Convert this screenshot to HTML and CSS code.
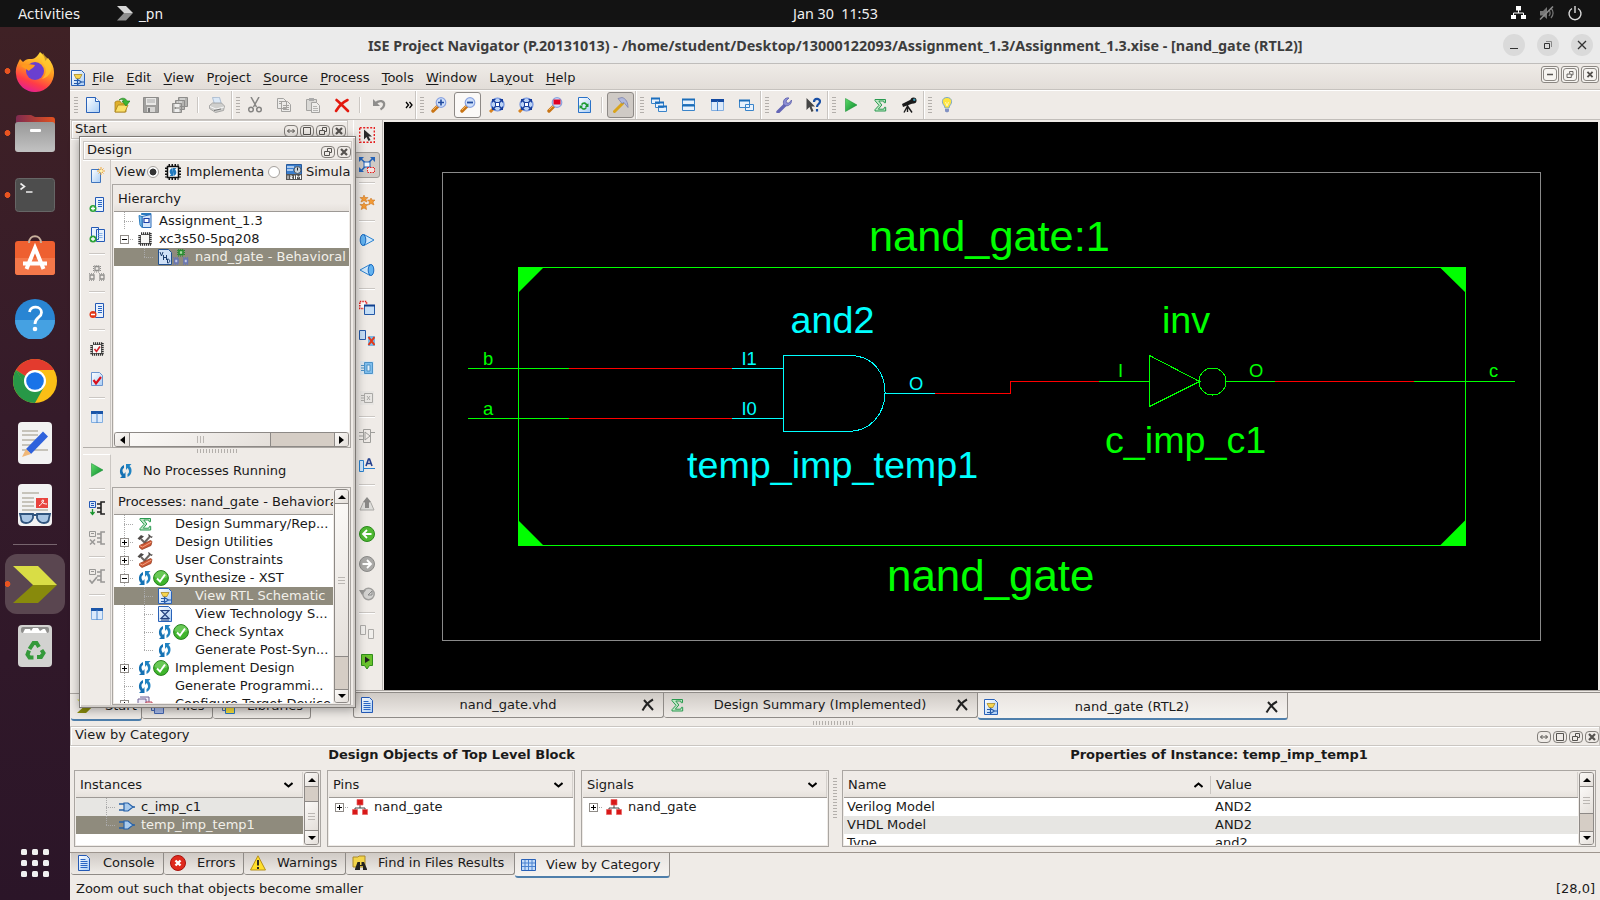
FILE: index.html
```html
<!DOCTYPE html>
<html lang="en">
<head>
<meta charset="utf-8">
<title>ISE Project Navigator</title>
<link rel="stylesheet" href="styles.css">
</head>
<body>
<svg class="defs" width="0" height="0">
<defs>
<linearGradient id="gPage" x1="0" y1="0" x2="1" y2="1"><stop offset="0" stop-color="#fff"/><stop offset="1" stop-color="#a9cdf5"/></linearGradient>
<linearGradient id="gFox" x1="0.7" y1="0" x2="0.3" y2="1"><stop offset="0" stop-color="#ffe23a"/><stop offset="0.45" stop-color="#ff9420"/><stop offset="0.75" stop-color="#ff3c47"/><stop offset="1" stop-color="#e01c9a"/></linearGradient>
<linearGradient id="gFolder" x1="0" y1="0" x2="1" y2="0"><stop offset="0" stop-color="#7e2a50"/><stop offset="1" stop-color="#e2521f"/></linearGradient>
<linearGradient id="gGray" x1="0" y1="0" x2="0" y2="1"><stop offset="0" stop-color="#989898"/><stop offset="1" stop-color="#c2c2c2"/></linearGradient>
<linearGradient id="gPlay" x1="0" y1="0" x2="1" y2="1"><stop offset="0" stop-color="#5fdc6a"/><stop offset="1" stop-color="#08862a"/></linearGradient>
<symbol id="new" viewBox="0 0 16 16"><path d="M1.5.5h9l4 4v11h-13z" fill="url(#gPage)" stroke="#2a62b8"/><path d="M10.5.5v4h4" fill="#fff" stroke="#2a62b8"/></symbol>
<symbol id="open" viewBox="0 0 16 16"><path d="M1 15V5l2-1h3l1 2h5v9z" fill="#e0b02c" stroke="#a8821c" stroke-width=".8"/><path d="M1 15l3-7h10l-3 7z" fill="#fbe069" stroke="#a8821c" stroke-width=".8"/><path d="M5 3c3-3 7-2 8 1h3l-4 5-4-5h2c-1-2-3-2-5-1z" fill="#3db534" stroke="#1d7d1a" stroke-width=".6"/></symbol>
<symbol id="save" viewBox="0 0 16 16"><path d="M.5.5h15v15h-15z" fill="#a09f9d" stroke="#8d8c8a"/><path d="M3 1h10v7H3z" fill="#e9e8e6"/><path d="M4 3h8M4 5h8" stroke="#aaa"/><path d="M4 10h8v5H4z" fill="#d6d5d3"/><path d="M5 11h2v4H5z" fill="#777"/></symbol>
<symbol id="saveall" viewBox="0 0 16 16"><g fill="#b5b4b1" stroke="#8e8d8b"><path d="M6.500.5h9v9h-9zM3.500 3.500h9v9h-9zM.5 6.500h9v9h-9z"/></g><path d="M2.500 7h5v3h-5z" fill="#f0efed"/><path d="M2.500 12h5v3h-5zM8 1.500h5v1H8zM5 4.500h5v1H5z" fill="#eee"/></symbol>
<symbol id="print" viewBox="0 0 16 16"><path d="M3.500.5l7-.2 2 7h-7z" fill="#dbe8f6" stroke="#9fb2ca" stroke-width=".8"/><path d="M.5 8.500l3-2.500h9l3 3-1 4.500-8 2-6-4z" fill="#cfcfcd" stroke="#9b9b99" stroke-width=".8"/><path d="M1 9.500l6 2.500 8-2" stroke="#f5f5f5" fill="none"/><path d="M5 13.500l7-1.500" stroke="#777"/></symbol>
<symbol id="cut" viewBox="0 0 16 16"><g fill="none" stroke="#868583" stroke-width="1.500"><path d="M4 0l5.500 10M12 0L6.500 10"/><circle cx="4" cy="12.500" r="2.300"/><circle cx="12" cy="12.500" r="2.300"/></g></symbol>
<symbol id="copy" viewBox="0 0 16 16"><g fill="#ecebe9" stroke="#a4a3a1"><path d="M1.500 1.500h6l3 3v7h-9zM5.500 4.500h6l3 3v7h-9z"/><path d="M3 4.500h3M3 6.500h2M7 8.500h6M7 10.500h6M7 12.500h6"/></g></symbol>
<symbol id="paste" viewBox="0 0 16 16"><path d="M1.500 2.500h10v11h-10z" fill="#dad9d6" stroke="#a4a3a1"/><path d="M4 1h5v3H4z" fill="#aaa"/><path d="M6.500 5.500h5l3 3v7h-8z" fill="#eeedeb" stroke="#a4a3a1"/><path d="M8 9.500h4M8 11.500h5M8 13.500h5" stroke="#b5b4b2"/></symbol>
<symbol id="del" viewBox="0 0 16 16"><path d="M2.500 3C6 6 10 10 14 14M13.500 3C9 5 5 9 2 14" fill="none" stroke="#e3190e" stroke-width="2.600" stroke-linecap="round"/></symbol>
<symbol id="undo" viewBox="0 0 16 16"><path d="M2 2v7h7z" fill="#8f8e8c"/><path d="M4 7C8 2 14 4 13 8.500c-.4 2-1.500 3-3.500 4" fill="none" stroke="#8f8e8c" stroke-width="2.300"/></symbol>
<symbol id="mag" viewBox="0 0 16 16"><path d="M2 14l5-5" stroke="#c87414" stroke-width="3.400" stroke-linecap="round"/><path d="M2 13l4-4" stroke="#f5b254"/><circle cx="10" cy="5.500" r="4.800" fill="#cfe0fa" stroke="#8aa3e0" stroke-width="1.200"/></symbol>
<symbol id="zin" viewBox="0 0 16 16"><use href="#mag"/><path d="M10 2.500v6M7 5.500h6" stroke="#214ba0" stroke-width="1.600"/></symbol>
<symbol id="zout" viewBox="0 0 16 16"><use href="#mag"/><path d="M7 5.500h6" stroke="#214ba0" stroke-width="1.800"/></symbol>
<symbol id="zfit" viewBox="0 0 16 16"><path d="M1 15l3-3" stroke="#d88320" stroke-width="3"/><circle cx="8.500" cy="7.500" r="6.500" fill="#bcd3f5" stroke="#6f8fdb" stroke-width="1.200"/><path d="M4.500 3.500l8 8M12.500 3.500l-8 8" stroke="#173d9c" stroke-width="1.400"/><path d="M3 2h4L3 6zM14 2h-4l4 4zM3 13V9l4 4zM14 13V9l-4 4z" fill="#173d9c"/><path d="M6.500 5.500h4v4h-4z" fill="#fff" stroke="#173d9c"/></symbol>
<symbol id="zred" viewBox="0 0 16 16"><use href="#mag"/><path d="M6.500 2.500h7v5h-7z" fill="#e00024"/></symbol>
<symbol id="refresh" viewBox="0 0 16 16"><path d="M2.500.5h9l3 3v12h-12z" fill="url(#gPage)" stroke="#2a72c8"/><path d="M5 7.500c1-3 5-3 6-.5l1.500-.5V10H9l1-1.500C9 6.500 7 6.500 6.500 8zM11 10.500c-1 3-5 3-6 .5l-1.500.8V8.500H7L6 10c1 1.500 2.500 1.500 3.500.3z" fill="#1e9b32"/></symbol>
<symbol id="hammer" viewBox="0 0 16 16"><path d="M1.500 14.500l8-8" stroke="#d9a41b" stroke-width="3" stroke-linecap="round"/><path d="M5 1.500l4-1c4 1 6 5 6 10l-4-5-2 1z" fill="#b0b8dc" stroke="#7279a5" stroke-width=".7"/></symbol>
<symbol id="cascade" viewBox="0 0 16 16"><g fill="#e8f2fd" stroke="#3a84c9"><path d="M.5 1.500h8v5h-8zM4.500 5.500h8v5h-8zM7.500 9.500h8v5h-8z"/></g><path d="M0 1.500h9M4 5.500h9M7 9.500h9" stroke="#1c6fbe" stroke-width="2"/></symbol>
<symbol id="tileh" viewBox="0 0 16 16"><path d="M2.500 2.500h12v5h-12zM2.500 8.500h12v5h-12z" fill="#e8f2fd" stroke="#3a84c9"/><path d="M2 2.500h13M2 8.500h13" stroke="#1c6db8" stroke-width="2"/></symbol>
<symbol id="tilev" viewBox="0 0 16 16"><path d="M2.500 2.500h12v11h-12z" fill="#dceafb" stroke="#82aee0"/><path d="M2 3.500h13" stroke="#1349a0" stroke-width="3"/><path d="M8.500 4v10" stroke="#4a86cd"/></symbol>
<symbol id="layers" viewBox="0 0 16 16"><g fill="#e8f2fd" stroke="#3a84c9"><path d="M7.500 7.500h8v6h-8zM1.500 3.500h10v7h-10z"/></g><path d="M1 3.500h11" stroke="#1c6db8" stroke-width="2"/></symbol>
<symbol id="wrench" viewBox="0 0 16 16"><path d="M2 15l7-7" stroke="#6466b6" stroke-width="3.400" stroke-linecap="round"/><path d="M8 8C6 4 9 0 13 1l-3 3 1 2 2 0 2.500-3C16 7 12 10.500 8 8z" fill="#8b8dd4" stroke="#5557a5" stroke-width=".7"/></symbol>
<symbol id="whats" viewBox="0 0 16 16"><path d="M1.500 1v12l3-3 2 5 2-1-2-4.500h3.500z" fill="#454545"/><path d="M9 5c0-4 6-4 6-.5 0 2.500-3 2.500-3 5.500M12 12v2.500" fill="none" stroke="#194fa5" stroke-width="2.200"/></symbol>
<symbol id="play" viewBox="0 0 16 16"><path d="M2.500 1.500v13L14 8z" fill="url(#gPlay)" stroke="#0b8a2b" stroke-width=".5"/></symbol>
<symbol id="sigma" viewBox="0 0 16 16"><path d="M3 2.500h10.500v3.200h-1.300L11.700 4H6.800l3 4-3.500 4.200h5.400l.8-1.900h1.200v3.700H3v-1.300L7 8.300 3 3.700z" fill="#bfe8c6" stroke="#2b9a50" stroke-width="1"/></symbol>
<symbol id="scope" viewBox="0 0 16 16"><path d="M1 7l10-5 2 4-11 4z" fill="#1b1b1b"/><circle cx="12.500" cy="3.500" r="3" fill="#1b1b1b"/><circle cx="13.300" cy="2.800" r="1.200" fill="#3d9bb5"/><path d="M6.500 8v7M6.500 9l-3.500 6.500M6.500 9l4.500 6.500" stroke="#1b1b1b" stroke-width="1.400"/></symbol>
<symbol id="bulb" viewBox="0 0 16 16"><path d="M8 .5C3 .5 2 5.500 5.500 9l.5 2h4l.5-2C14 5.500 13 .5 8 .5z" fill="#ffe53e" stroke="#79a6c9"/><path d="M6 12h4v2.500l-2 1-2-1z" fill="#8292c4"/><path d="M6.500 5L8 9l1.500-4" fill="none" stroke="#fff8b5"/></symbol>
<symbol id="rtl" viewBox="0 0 16 16"><path d="M1.500.5h10l3 3v12h-13z" fill="url(#gPage)" stroke="#2a62b8"/><path d="M4 4.500h8L9.500 9v-.5h-3V9z" fill="#f6d54e" stroke="#a98a2a" stroke-width=".8"/><path d="M4 10.500h4M4 13.500h4M7.500 9.500v5l4-2.500zM11 12h3" fill="none" stroke="#2459a8" stroke-width="1.200"/></symbol>
<symbol id="tech" viewBox="0 0 16 16"><path d="M1.500.5h10l3 3v12h-13z" fill="url(#gPage)" stroke="#2a62b8"/><path d="M4 4.500h8L4 12.500h8zM4 14h8" fill="#b6d0f0" stroke="#23407c" stroke-width="1.100"/></symbol>
<symbol id="doc" viewBox="0 0 16 16"><path d="M2.500.5h8l3 3v12h-11z" fill="url(#gPage)" stroke="#2459b5"/><path d="M4.500 4.500h5M4.500 6.500h7M4.500 8.500h7M4.500 10.500h7M4.500 12.500h7" stroke="#2a66c4"/></symbol>
<symbol id="newsrc" viewBox="0 0 16 16"><path d="M2.500 2.500h9v13h-9z" fill="url(#gPage)" stroke="#3f74bd"/><path d="M12 0v8M8 4h8M9.500 1.500l5 5M14.500 1.500l-5 5" stroke="#f0a93c"/><circle cx="12" cy="4" r="1.500" fill="#fff3b0"/></symbol>
<symbol id="adddoc" viewBox="0 0 16 16"><path d="M6.500.5h8v14h-8z" fill="#e8f1fc" stroke="#2459b5"/><path d="M9 3.500h4M9 5.500h4M9 7.500h4M9 9.500h4" stroke="#2a66c4"/><circle cx="4" cy="11.500" r="3.500" fill="#2ba338"/><path d="M4 9.500v4M2 11.500h4" stroke="#fff" stroke-width="1.300"/></symbol>
<symbol id="addcopy" viewBox="0 0 16 16"><path d="M2.500.5h7v12h-7zM7.500 2.500h8v12h-8z" fill="#e8f1fc" stroke="#2459b5"/><path d="M9.500 6.500h4M9.500 8.500h4M9.500 10.500h4" stroke="#8bb3e8"/><circle cx="4" cy="12" r="3.500" fill="#2ba338"/><path d="M4 10v4M2 12h4" stroke="#fff" stroke-width="1.300"/></symbol>
<symbol id="remdoc" viewBox="0 0 16 16"><path d="M6.500.5h8v14h-8z" fill="#e8f1fc" stroke="#2459b5"/><path d="M9 3.500h4M9 5.500h4M9 7.500h4M9 9.500h4" stroke="#2a66c4"/><circle cx="4" cy="11.500" r="3.500" fill="#e33717"/><path d="M2 11.500h4" stroke="#fff" stroke-width="1.500"/></symbol>
<symbol id="hier" viewBox="0 0 16 16"><path d="M6 1.500h4v4H6zM1 10h4v4H1zM11 10h4v4h-4z" fill="#efebe7" stroke="#8f8e8c" stroke-width="1.300"/><path d="M5 0h6M5 7h6M4.500 1v6M11.500 1v6M0 8.700h6M0 15.300h6M10 8.700h6M10 15.300h6" stroke="#8f8e8c" stroke-dasharray="1 1"/></symbol>
<symbol id="hierc" viewBox="0 0 16 16"><path d="M6 1.500h4v4H6z" fill="#a7dba0" stroke="#238c2c" stroke-width="1.600"/><path d="M1.500 10h3.500v4H1.500zM11 10h3.500v4H11z" fill="#c3c8e4" stroke="#6675b5" stroke-width="1.500"/><path d="M5 .3h6M5 7h6M4.700 1v6M11.500 1v6" stroke="#238c2c" stroke-dasharray="1 1"/><path d="M0 8.500h6M0 15.500h6M10 8.500h6M10 15.500h6" stroke="#6675b5" stroke-dasharray="1 1"/></symbol>
<symbol id="chip" viewBox="0 0 16 16"><path d="M4.500 3.500h8v9h-9v-8z" fill="#f8f8f6" stroke="#666"/><path d="M4 2.500h10M2.500 4v10M3 13.500h11M13.500 2v12" stroke="#333" stroke-width="2.400" stroke-dasharray="1.200 .8"/></symbol>
<symbol id="chipred" viewBox="0 0 16 16"><use href="#chip"/><path d="M5.500 8l2 2.500 3.500-5" fill="none" stroke="#d1202a" stroke-width="1.600"/></symbol>
<symbol id="chipblue" viewBox="0 0 16 16"><path d="M2.500 2.500h11v11h-11z" fill="#fff" stroke="#111" stroke-width="1.500"/><path d="M3.500 1h10M3.500 15h10M1 3.500v10M15 3.500v10" stroke="#111" stroke-width="2" stroke-dasharray="1.500 1.500"/><path d="M7.500 4C4 5 4 9 6 10.500L4.500 12H8V8.500zM8.500 12c3.500-1 3.500-5 1.500-6.500L11.500 4H8v3.500z" fill="#2179bd"/></symbol>
<symbol id="checkdoc" viewBox="0 0 16 16"><path d="M2.500 1.500h8l3 3v10h-11z" fill="url(#gPage)" stroke="#6b95cf"/><path d="M4.500 9l2.500 3.500L12 6" fill="none" stroke="#d8101c" stroke-width="2.200"/></symbol>
<symbol id="sim" viewBox="0 0 16 16"><path d="M.5.5h15v10H.5z" fill="#3b7fce" stroke="#295a9b"/><path d="M1 3h7M1 6h6" stroke="#cfe2fa" stroke-width="1.500"/><circle cx="11.500" cy="6" r="3.500" fill="#ccd5dd" stroke="#4d5a68"/><path d="M11.500 3.500v3" stroke="#222"/><path d="M0 10h16v6H0z" fill="#555"/><path d="M2 11.500v3.500M4 12h2v1.300h-1.500v1.200h2M8.500 11.500v3.500M10.500 15v-3.500l2 1.500 2-1.500V15" fill="none" stroke="#fff"/></symbol>
<symbol id="project" viewBox="0 0 16 16"><path d="M4.500.5h9.500v1H4.500z" fill="#5aa0d8" stroke="#2a7bbf"/><path d="M5 3.500l9-2v13H5.500z" fill="#d5e6fa" stroke="#2a6bb8"/><path d="M2 2.500l3 1v11L3 12z" fill="#7dbcea" stroke="#2a7bbf"/><path d="M7 5.500h5v4H7z" fill="#fff" stroke="#1d3fa5" stroke-width="1.200"/></symbol>
<symbol id="vhd" viewBox="0 0 16 16"><path d="M1.500.5h10l3 3v12h-13z" fill="#cfe0f6" stroke="#20508f"/><path d="M3 3l1.500 4L6 3M6.500 6v5M9.500 6v5M6.500 8.500h3M10.500 10v4c3 0 3-4 0-4z" fill="none" stroke="#1c3c6c"/></symbol>
<symbol id="proc" viewBox="0 0 16 16"><path d="M6 2C1 4 1 11 4 13l-2 2h5.500V9L6 11C4 9 4 6 6 5z" fill="#1571b3"/><path d="M9.500 14c5-2 5-9 2-11l2-2H8v6l1.500-2c2 2 2 5 0 6z" fill="#2083c2"/></symbol>
<symbol id="ok" viewBox="0 0 16 16"><circle cx="8" cy="8" r="7.400" fill="#3fb52c" stroke="#247f1b"/><path d="M1.500 7a6.500 6 0 0 1 13 0c-4 2-8 2-13 0z" fill="#8cd97a" opacity=".55"/><path d="M4 8.500l3 3 5-7" fill="none" stroke="#fff" stroke-width="2"/></symbol>
<symbol id="tools" viewBox="0 0 16 16"><path d="M4 5l7 7M12.500 3L7 9" stroke="#6b6663" stroke-width="2"/><path d="M.5 4.500L4 1l3 1.500L4 5 2.500 6zM11 0l1 3 3 1 .5-2-1.500.5L13 1z" fill="#4e4a48"/><path d="M2.500 11.500L13.500 6.500l1.500 1-1 4-9 4-2.500-2z" fill="#cf5836" stroke="#8b3519" stroke-width=".7"/><path d="M2.500 11.500l3 1.500 9-5" fill="none" stroke="#f3a482"/></symbol>
<symbol id="procmap" viewBox="0 0 16 16"><path d="M.5 1.500h6v6h-6z" fill="#dceafb" stroke="#2459b5"/><path d="M2 3.500h3M2 5.500h3" stroke="#2459b5"/><path d="M3.500 9v5M1.500 12l2 2.500 2-2.500" stroke="#17942c" fill="none" stroke-width="1.300"/><path d="M16 2h-4v12h4M8 4h4M8 8h4M8 12h4" fill="none" stroke="#222" stroke-width="1.600"/></symbol>
<symbol id="procx" viewBox="0 0 16 16"><g fill="none" stroke="#999896"><path d="M.5 1.500h6v5h-6zM2 3.500h3"/><path d="M1 9.500l5 5M6 9.500l-5 5" stroke-width="1.500"/><path d="M16 2h-4v12h4M8 4h4M8 8h4M8 12h4" stroke-width="1.600"/></g></symbol>
<symbol id="procc" viewBox="0 0 16 16"><g fill="none" stroke="#999896"><path d="M.5 1.500h6v5h-6zM2 3.500h3"/><path d="M.5 12l2.500 3 5-6" stroke-width="1.700"/><path d="M16 2h-4v12h4M8 4h4M8 8h4M8 12h4" stroke-width="1.600"/></g></symbol>
<symbol id="cols" viewBox="0 0 16 16"><path d="M2.500 2.500h11v11h-11z" fill="#dceafb" stroke="#82aee0"/><path d="M2 3.500h12" stroke="#1a55a8" stroke-width="3"/><path d="M8 4v10" stroke="#4a86cd"/></symbol>
<symbol id="select" viewBox="0 0 16 16"><path d="M.7.7h14.600v14.600H.7z" fill="none" stroke="#e52222" stroke-width="1.400" stroke-dasharray="2 1.500"/><path d="M5 2.500v10l2.500-2.500 2 4 2-1-2-3.500H13z" fill="#2a2a2a"/></symbol>
<symbol id="fitsel" viewBox="0 0 16 16"><path d="M1 1l14 13M14 1L2 14" stroke="#2563b7" stroke-width="1.600"/><path d="M0 0h5L0 5zM16 0h-5l5 5zM0 15h5l-5-5z" fill="#2563b7"/><path d="M5 5h6v5H5z" fill="#eef5fc" stroke="#2563b7"/><path d="M8.500 10.500h7v5h-7z" fill="#f6e0dc" stroke="#e52222" stroke-dasharray="1.500 1"/></symbol>
<symbol id="stars" viewBox="0 0 16 16"><g fill="#f39a35" stroke="#c66d15" stroke-width=".5"><path d="M5 1l1 2.500h3l-2 2 1 2.500-3-1.300L2 8l1-2.500-2-2h3zM12 4l1 2h3l-2 2 1 3-3-1.500L9.500 11l1-3-2-2h2.500zM5 8.500l1 2h3l-2 2 .5 3L5 14l-2.800 1.500.8-3-2-2h3z"/></g></symbol>
<symbol id="fwd" viewBox="0 0 16 16"><path d="M5 2.500L15 8l-10 5.500z" fill="#cfe7fb" stroke="#2a82d0"/><ellipse cx="4" cy="8" rx="2.800" ry="5.500" fill="#63b3f0" stroke="#1a6ac0"/></symbol>
<symbol id="bwd" viewBox="0 0 16 16"><path d="M11 2.500L1 8l10 5.500z" fill="#cfe7fb" stroke="#2a82d0"/><ellipse cx="12" cy="8" rx="2.800" ry="5.500" fill="#63b3f0" stroke="#1a6ac0"/></symbol>
<symbol id="addwin" viewBox="0 0 16 16"><path d="M.8 1.500h6.700v7H.8z" fill="#fff" stroke="#e52222" stroke-width="1.600" stroke-dasharray="1.500 1"/><path d="M5.500 5.500h10v9h-10z" fill="#c5def6" stroke="#2459a8"/><path d="M5 5.500h11" stroke="#10408f" stroke-width="2"/></symbol>
<symbol id="delwin" viewBox="0 0 16 16"><path d="M.5.500h6v9h-6z" fill="#c5def6" stroke="#2459a8"/><path d="M9 6h7v10H9z" fill="#7bb8e5"/><path d="M9.500 7l6 8M15.500 7l-6 8" stroke="#e33717" stroke-width="2"/></symbol>
<symbol id="chipout" viewBox="0 0 16 16"><path d="M1 1h14v14H1z" fill="#dce7f0"/><path d="M5.500 2.500h8v11h-8z" fill="#7fbdec" stroke="#4d93c8"/><path d="M8 5h3v6H8z" fill="#e7f3fc" stroke="#4d93c8"/><path d="M2 5.500h3M2 8h3M2 10.500h3" stroke="#4d93c8"/></symbol>
<symbol id="chipoff" viewBox="0 0 16 16"><path d="M1 1h14v14H1z" fill="#e8e6e3"/><path d="M5.500 3.500h8v9h-8zM8 6l3 4M11 6l-3 4M2 5.500h3M2 8h3M2 10.500h3" fill="none" stroke="#aaa9a6"/></symbol>
<symbol id="muxoff" viewBox="0 0 16 16"><path d="M4.500 1.500h7v13h-7zM6 4l5 4-5 4zM0 4.500h4M0 8h4M0 11.500h4M12 4.500h4" fill="none" stroke="#9f9e9b"/></symbol>
<symbol id="label" viewBox="0 0 16 16"><path d="M.5 2.500h4v11h-4z" fill="#cfe7fb" stroke="#2a82d0"/><path d="M5 10.500h11" stroke="#2a82d0"/><path d="M7 8l2.500-7h1L13 8M8 5.500h4" fill="none" stroke="#24418f" stroke-width="1.600"/></symbol>
<symbol id="up" viewBox="0 0 16 16"><path d="M4 7L1 14h14l-3-7" fill="#deddda" stroke="#a9a8a5"/><path d="M8 1L3.500 6.500H6V12h4V6.500h2.500z" fill="#8a8987"/></symbol>
<symbol id="goback" viewBox="0 0 16 16"><circle cx="8" cy="8" r="7.500" fill="#4fb832" stroke="#2b8a1c"/><path d="M12.500 8h-8M8 4L4 8l4 4" fill="none" stroke="#fff" stroke-width="1.800"/></symbol>
<symbol id="gofwd" viewBox="0 0 16 16"><circle cx="8" cy="8" r="7.500" fill="#aaa9a7" stroke="#8b8a88"/><path d="M3.500 8h8M8 4l4 4-4 4" fill="none" stroke="#fff" stroke-width="1.800"/></symbol>
<symbol id="hist" viewBox="0 0 16 16"><circle cx="9.500" cy="8" r="5.700" fill="#d3d2d0" stroke="#a09f9d" stroke-width="1.500"/><path d="M0 4h7L3 9z" fill="#989795"/><path d="M9 9l4-4M9 9h4v-4" fill="none" stroke="#888"/></symbol>
<symbol id="pair" viewBox="0 0 16 16"><path d="M1.500 1.500h5v9h-5zM9.500 5.500h5v9h-5z" fill="#f1efec" stroke="#adaba8"/></symbol>
<symbol id="gotag" viewBox="0 0 16 16"><path d="M2.500.500h11v11h-3L8 15l-2.500-3.500h-3z" fill="#69c22d" stroke="#2e8d1b"/><path d="M6 2.500v6.500L11 6z" fill="#222"/></symbol>
<symbol id="gate" viewBox="0 0 16 16"><path d="M0 5h5M0 11h5M13 8h3" stroke="#2661a8" stroke-width="1.300"/><path d="M5 4h4L14 8l-5 4H5z" fill="#a9cbed" stroke="#2661a8" stroke-width="1.200"/></symbol>
<symbol id="net" viewBox="0 0 16 16"><path d="M8 6v3M3 12V9h10v3" fill="none" stroke="#444"/><path d="M5 .5h6v5.500H5zM.5 10.500h5v5h-5zM10.500 10.500h5v5h-5z" fill="#d81818" stroke="#e86060" stroke-width=".7"/></symbol>
<symbol id="err" viewBox="0 0 16 16"><circle cx="8" cy="8" r="7.500" fill="#df2a1d" stroke="#a8120d"/><path d="M5.500 5.500l5 5M10.500 5.500l-5 5" stroke="#fff" stroke-width="2.400"/></symbol>
<symbol id="warn" viewBox="0 0 16 16"><path d="M8 .8L15.500 15H.5z" fill="#ffdf2b" stroke="#b6901b"/><path d="M8 5v5.500M8 12v2" stroke="#222" stroke-width="1.900"/></symbol>
<symbol id="find" viewBox="0 0 16 16"><path d="M1 2h5l1-1h6v11H1z" fill="#f2d44a" stroke="#a8882a"/><path d="M3 14l2.500-7h2.500v3h1.500V7H12l3 7v1h-4v-4H8v4H3z" fill="#222"/></symbol>
<symbol id="grid" viewBox="0 0 16 16"><path d="M.5 2.500h14v11H.5z" fill="#c4dcf9" stroke="#2a62b8"/><path d="M4 3v10M7.500 3v10M11 3v10M1 6h13M1 9.500h13" stroke="#4a82d0"/></symbol>
<symbol id="xil" viewBox="0 0 44 38"><path d="M0 1h25l19 19H20z" fill="#d9dd45"/><path d="M20 20h24L25 38H0z" fill="#888a0c"/></symbol>
<symbol id="files" viewBox="0 0 16 16"><path d="M.5.500h9v9h-9zM3.500 3.500h9v9h-9z" fill="#c7d7f5" stroke="#4668b5"/><path d="M6.500 6.500h9v9h-9z" fill="#a9bcec" stroke="#4668b5"/></symbol>
<symbol id="libs" viewBox="0 0 16 16"><path d="M.5.500h9v9h-9zM3.500 3.500h9v9h-9z" fill="#fbe98a" stroke="#4668b5"/><path d="M6.500 6.500h9v9h-9z" fill="#f8df3e" stroke="#2a7bc5"/></symbol>
<symbol id="conf" viewBox="0 0 16 16"><path d="M1 3h8v9H1zM3 1h9v8" fill="#eeeaf5" stroke="#6d6194"/><path d="M9 6h6v6H9z" fill="#f9dada" stroke="#bb4056"/></symbol>
<symbol id="tabx" viewBox="0 0 14 14"><path d="M3 2l9 10M12 1.500C7 4 4 8 1.500 12.500" fill="none" stroke="#222" stroke-width="2"/></symbol>
<symbol id="bfloat" viewBox="0 0 14 12"><path d="M3.500 6h7M5.500 4L3.500 6l2 2M8.500 4l2 2-2 2" fill="none" stroke="#55524f"/></symbol>
<symbol id="bmax" viewBox="0 0 14 12"><path d="M3.500 2.500h7v7h-7z" fill="none" stroke="#55524f"/></symbol>
<symbol id="brest" viewBox="0 0 14 12"><path d="M6.500 5V2.500h4v4H8.500M3.500 5.500h5v4h-5z" fill="none" stroke="#55524f"/></symbol>
<symbol id="bclose" viewBox="0 0 14 12"><path d="M4 3l6 6M10 3L4 9" stroke="#55524f" stroke-width="2.200"/></symbol>
<symbol id="bmin" viewBox="0 0 14 12"><path d="M3.500 6h7" stroke="#55524f" stroke-width="2"/></symbol>
</defs>
</svg>

<header class="topbar">
  <span class="activities">Activities</span>
  <svg class="app-ico" width="17" height="15" viewBox="0 0 17 15"><path d="M0 0h9l7 7H7z" fill="#d6d6d6"/><path d="M7 7h9l-7 7.500H0z" fill="#8e8e8e"/></svg>
  <span class="app-name">_pn</span>
  <span class="clock">Jan 30&nbsp; 11:53</span>
  <div class="tray">
    <svg width="16" height="14" viewBox="0 0 16 14"><path d="M7.500 4v3M2.500 10V7h10v3" fill="none" stroke="#fff"/><path d="M5 0h5v4.500H5zM0 9h5v4H0zM10 9h5v4h-5z" fill="#fff"/></svg>
    <svg width="16" height="14" viewBox="0 0 16 14"><path d="M1 5h3l4-4v12L4 9.500H1z" fill="#777"/><path d="M10 4c1.500 2 1.500 4 0 6M12 2c2.500 3 2.500 7 0 10" fill="none" stroke="#777" stroke-width="1.200"/><path d="M1 13.500L14 .5" stroke="#8c8c8c" stroke-width="1.500"/></svg>
    <svg width="16" height="15" viewBox="0 0 16 15"><path d="M5 2.500a6 6 0 1 0 6 0M8 0v7" fill="none" stroke="#ddd" stroke-width="1.400"/></svg>
  </div>
</header>

<div class="screen">
<nav class="dock">
  <div class="app run"><svg width="40" height="42" viewBox="0 0 40 42"><path d="M25 2c4 3 5 6 5 9l3-3c4 5 6 9 6 14a19 19 0 0 1-38 2C0 18 3 13 5 9l3 3c2-2 4-3 6-3 4 0 7 0 11-7z" fill="url(#gFox)"/><circle cx="20" cy="21" r="9" fill="#6a3fd0"/><path d="M6 16c6-3 10-1 14-1-1 3-5 4-6 6-2-2-6-3-8-5z" fill="#ff9a1e"/><path d="M28 3c-3 7 0 10 2 14 2 5 0 9-3 12 8-2 12-10 8-18-1-2-5-4-7-8z" fill="#ffc92e" opacity=".7"/></svg></div>
  <div class="app run"><svg width="40" height="38" viewBox="0 0 40 38"><path d="M1 4q0-3 3-3h12l4 2h17q3 0 3 3v9H1z" fill="url(#gFolder)"/><rect y="8" width="40" height="30" rx="3" fill="url(#gGray)"/><rect x="15" y="15" width="11" height="3" rx="1" fill="#fff"/></svg></div>
  <div class="app run"><svg width="40" height="34" viewBox="0 0 40 34"><rect x=".5" y=".5" width="39" height="33" rx="3" fill="#4d4d4d" stroke="#666"/><path d="M5.500 5.500l4 3-4 3M11 14h6.500" fill="none" stroke="#eee" stroke-width="1.600"/></svg></div>
  <div class="app soft"><svg width="40" height="40" viewBox="0 0 40 40"><rect y="6" width="40" height="34" rx="3" fill="#ee6030"/><path d="M0 23h40v14q0 3-3 3H3q-3 0-3-3z" fill="#f4784a"/><path d="M14 8c0-9 12-9 12 0" fill="none" stroke="#c8b09c" stroke-width="2"/><path d="M11.500 34L20 13l8.500 21M8 28.500h24" fill="none" stroke="#fff" stroke-width="4"/></svg></div>
  <div class="app"><svg width="40" height="40" viewBox="0 0 40 40"><circle cx="20" cy="20" r="20" fill="#2985d3"/><path d="M0 21h40a20 20 0 0 1-40 0z" fill="#45a1e2"/><path d="M14.500 13c1-7 12-6 12 .5C26.500 19 20 18 20 25" fill="none" stroke="#fff" stroke-width="2.800"/><circle cx="20" cy="30" r="2.300" fill="#fff"/></svg></div>
  <div class="app"><svg width="44" height="44" viewBox="0 0 44 44"><circle cx="22" cy="22" r="22" fill="#fbbf16"/><path d="M3 11a22 22 0 0 0 19 33l9.500-17H13z" fill="#279847"/><path d="M3 11A22 22 0 0 1 41 11H20l-8 6z" fill="#e33b2e"/><path d="M3 11l10 17 7-6z" fill="#279847"/><circle cx="22" cy="22" r="11" fill="#fff"/><circle cx="22" cy="22" r="8.800" fill="#1a73e8"/></svg></div>
  <div class="app"><svg width="34" height="42" viewBox="0 0 34 42"><rect width="34" height="42" rx="4" fill="#f2f2f2"/><path d="M4 9h16M4 13h16M4 18h20M4 23h16M4 28h26" stroke="#b8b4a8" stroke-width="1.500"/><path d="M8 27L25 9.500l5 5L13 32z" fill="#2f62dc"/><path d="M4 35l4-8 5 5z" fill="#f0b878"/></svg></div>
  <div class="app"><svg width="34" height="42" viewBox="0 0 34 42"><rect width="34" height="42" rx="4" fill="#f2f2f2"/><path d="M4 9h17M4 14h12M4 18h12M4 22h12M4 26h26" stroke="#b8b4a8" stroke-width="1.500"/><rect x="18" y="14" width="12" height="10" fill="#e8433e"/><path d="M21 22c3-2 6-6 4-6s-2 4 4 4" fill="none" stroke="#fff"/><path d="M2 30h13v4q-2 5-7 5t-5-5zM19 30h13l-1 4q0 5-5 5t-7-5zM14 31h6" fill="#a9c6e4" stroke="#31557e" stroke-width="1.800"/></svg></div>
  <div class="rule"></div>
  <div class="app run active"><svg width="44" height="38"><use href="#xil"/></svg></div>
  <div class="app"><svg width="34" height="42" viewBox="0 0 34 42"><rect width="34" height="42" rx="4" fill="#d2d2d0"/><rect x="3" y="2" width="28" height="6" rx="2" fill="#8d8d8b"/><path d="M5 8l2-4h5l1 2 2-3h5l2 3 3-2h2l2 4z" fill="#fff"/><g fill="none" stroke="#34993a" stroke-width="4"><path d="M11.500 24l4-6h3l2.500 4M23.500 25l2 3-2.500 4h-4M15.500 32.500h-4l-2-3 1.500-4"/></g></svg></div>
  <svg class="apps" width="28" height="28" viewBox="0 0 28 28" fill="#f0f0f0"><rect width="6" height="6" rx="1.500"/><rect x="11" width="6" height="6" rx="1.500"/><rect x="22" width="6" height="6" rx="1.500"/><rect y="11" width="6" height="6" rx="1.500"/><rect x="11" y="11" width="6" height="6" rx="1.500"/><rect x="22" y="11" width="6" height="6" rx="1.500"/><rect y="22" width="6" height="6" rx="1.500"/><rect x="11" y="22" width="6" height="6" rx="1.500"/><rect x="22" y="22" width="6" height="6" rx="1.500"/></svg>
</nav>

<main class="window">
  <div class="titlebar">
    <span class="wtitle">ISE Project Navigator (P.20131013) - /home/student/Desktop/13000122093/Assignment_1.3/Assignment_1.3.xise - [nand_gate (RTL2)]</span>
    <div class="wbtns">
      <i><svg width="22" height="22" viewBox="0 0 22 22"><path d="M7 14.500h8" stroke="#333"/></svg></i>
      <i><svg width="22" height="22" viewBox="0 0 22 22"><path d="M7.500 9.500h5v5h-5z" fill="none" stroke="#333"/><path d="M9 7.500h5.500V13" fill="none" stroke="#888"/></svg></i>
      <i><svg width="22" height="22" viewBox="0 0 22 22"><path d="M7 7l8 8M15 7l-8 8" stroke="#333" stroke-width="1.300"/></svg></i>
    </div>
  </div>
  <div class="menubar">
    <svg width="16" height="16"><use href="#rtl"/></svg>
    <span><u>F</u>ile</span><span><u>E</u>dit</span><span><u>V</u>iew</span><span>P<u>r</u>oject</span><span><u>S</u>ource</span><span><u>P</u>rocess</span><span><u>T</u>ools</span><span><u>W</u>indow</span><span>La<u>y</u>out</span><span><u>H</u>elp</span>
    <div class="mdi"><b><svg><use href="#bmin"/></svg></b><b><svg><use href="#brest"/></svg></b><b><svg><use href="#bclose"/></svg></b></div>
  </div>
  <div class="toolbar">
    <div class="group"><em></em><i><svg><use href="#new"/></svg></i><i><svg><use href="#open"/></svg></i><i><svg><use href="#save"/></svg></i><i><svg><use href="#saveall"/></svg></i><s></s><i><svg><use href="#print"/></svg></i></div>
    <div class="group"><em></em><i><svg><use href="#cut"/></svg></i><i><svg><use href="#copy"/></svg></i><i><svg><use href="#paste"/></svg></i><i><svg><use href="#del"/></svg></i><s></s><i><svg><use href="#undo"/></svg></i><span class="more"><svg class="chev" viewBox="0 0 8 8"><path d="M1 1l2.500 3L1 7M4.500 1L7 4 4.500 7" fill="none" stroke="#000" stroke-width="1.300"/></svg></span></div>
    <div class="group"><em></em><i><svg><use href="#zin"/></svg></i><i class="hover"><svg><use href="#zout"/></svg></i><i><svg><use href="#zfit"/></svg></i><i><svg><use href="#zfit"/></svg></i><i><svg><use href="#zred"/></svg></i><i><svg><use href="#refresh"/></svg></i><s></s><i class="down"><svg><use href="#hammer"/></svg></i></div>
    <div class="group"><em></em><i><svg><use href="#cascade"/></svg></i><i><svg><use href="#tileh"/></svg></i><i><svg><use href="#tilev"/></svg></i><i><svg><use href="#layers"/></svg></i></div>
    <div class="group"><em></em><i><svg><use href="#wrench"/></svg></i><i><svg><use href="#whats"/></svg></i></div>
    <div class="group"><em></em><i><svg><use href="#play"/></svg></i><i><svg><use href="#sigma"/></svg></i><i><svg><use href="#scope"/></svg></i></div>
    <div class="group"><em></em><i><svg><use href="#bulb"/></svg></i></div>
  </div>

  <div class="work">
    <section class="leftdock">
      <div class="ptitle"><span>Start</span><div class="pbtns"><b><svg><use href="#bfloat"/></svg></b><b><svg><use href="#bmax"/></svg></b><b><svg><use href="#brest"/></svg></b><b><svg><use href="#bclose"/></svg></b></div></div>
      <div class="ltabs"><div class="on lt1"><svg width="16" height="14" viewBox="0 0 44 38"><use href="#xil"/></svg><span>Start</span></div><div class="lt2"><svg width="16" height="16"><use href="#files"/></svg><span>Files</span></div><div class="lt3"><svg width="16" height="16"><use href="#libs"/></svg><span>Libraries</span></div></div>
    </section>
    <section class="right">
      <div class="canvasrow">
        <div class="vtool">
          <i><svg><use href="#select"/></svg></i><i class="down"><svg><use href="#fitsel"/></svg></i><s></s><i><svg><use href="#stars"/></svg></i><s></s><i><svg><use href="#fwd"/></svg></i><i><svg><use href="#bwd"/></svg></i><s></s><i><svg><use href="#addwin"/></svg></i><i><svg><use href="#delwin"/></svg></i><i><svg><use href="#chipout"/></svg></i><i><svg><use href="#chipoff"/></svg></i><s></s><i><svg><use href="#muxoff"/></svg></i><i><svg><use href="#label"/></svg></i><s></s><i><svg><use href="#up"/></svg></i><i><svg><use href="#goback"/></svg></i><i><svg><use href="#gofwd"/></svg></i><i><svg><use href="#hist"/></svg></i><s></s><i><svg><use href="#pair"/></svg></i><i><svg><use href="#gotag"/></svg></i>
        </div>
        <svg class="schematic" width="1214" height="568" viewBox="384 122 1214 568">
          <rect width="1214" height="568" x="384" y="122" fill="#000"/>
          <g fill="none" shape-rendering="crispEdges">
            <path d="M442.500 172.500H1540.500V640.500H442.500z" stroke="#8a8a8a"/>
            <path d="M518.500 267.500H1465.500V545.500H518.500z" stroke="#0f0"/>
            <path d="M569 368.500H732M569 418.500H732M935 393.500H1010.500V381.500H1099M1275 381.500H1414" stroke="#f00"/>
            <path d="M468 368.500H569M468 418.500H569M1099 381.500H1149M1226 381.500H1275M1414 381.500H1515M1149.500 355.500V406.500L1199.500 381.500z" stroke="#0f0"/>
            <ellipse cx="1212.500" cy="381.500" rx="13.500" ry="13.500" stroke="#0f0"/>
            <path d="M732 368.500H783M732 418.500H783M885 393.500H935M850 355.500H783.500V431.500H848C896 431.500 898 355.500 850 355.500" stroke="#0ff"/>
          </g>
          <path d="M518 267h26l-26 26zM1466 267h-26.500l26.500 26zM518 546v-26l26 26zM1466 546v-26.500L1439.500 546z" fill="#0f0"/>
          <g class="lg" fill="#0f0"><text x="869" y="250.500">nand_gate:1</text><text class="xl" x="887" y="590.500">nand_gate</text></g>
          <g class="md" fill="#0ff"><text x="790.500" y="333">and2</text><text x="687" y="478">temp_imp_temp1</text></g>
          <g class="md" fill="#0f0"><text x="1162" y="333">inv</text><text x="1105" y="453">c_imp_c1</text></g>
          <g class="sm" fill="#0f0"><text x="483" y="364.500">b</text><text x="483" y="414.500">a</text><text x="1118" y="376.500">I</text><text x="1249" y="376.500">O</text><text x="1489" y="376.500">c</text></g>
          <g class="sm" fill="#0ff"><text x="741.500" y="364.500">I1</text><text x="741.500" y="414.500">I0</text><text x="909" y="389.500">O</text></g>
        </svg>
      </div>
      <div class="dtabs">
        <div class="dt1"><svg width="16" height="16"><use href="#doc"/></svg><span>nand_gate.vhd</span><svg width="14" height="14"><use href="#tabx"/></svg></div>
        <div class="dt2"><svg width="16" height="16"><use href="#sigma"/></svg><span>Design Summary (Implemented)</span><svg width="14" height="14"><use href="#tabx"/></svg></div>
        <div class="dt3 on"><svg width="16" height="16"><use href="#rtl"/></svg><span>nand_gate (RTL2)</span><svg width="14" height="14"><use href="#tabx"/></svg></div>
      </div>
    </section>
  </div>

  <div class="hgrip"><em></em></div>
  <div class="ptitle wide"><span>View by Category</span><div class="pbtns"><b><svg><use href="#bfloat"/></svg></b><b><svg><use href="#bmax"/></svg></b><b><svg><use href="#brest"/></svg></b><b><svg><use href="#bclose"/></svg></b></div></div>
  <div class="category">
    <div class="objects">
      <h4>Design Objects of Top Level Block</h4>
      <div class="tables">
        <div class="box"><div class="bmain"><div class="bhead"><span>Instances</span><svg class="dd" width="9" height="6" viewBox="0 0 9 6"><path d="M.5 1l4 3.500 4-3.500" fill="none" stroke="#000" stroke-width="2"/></svg></div>
          <div class="brow alt inst"><q class="ln"></q><svg width="16" height="16"><use href="#gate"/></svg><span>c_imp_c1</span></div><div class="brow sel inst"><q class="ln end"></q><svg width="16" height="16"><use href="#gate"/></svg><span>temp_imp_temp1</span></div></div>
          <div class="vs"><b class="u"></b><span class="track"></span><b class="thumb g29"></b><b class="d"></b></div></div>
        <div class="box"><div class="bmain"><div class="bhead"><span>Pins</span><svg class="dd" width="9" height="6" viewBox="0 0 9 6"><path d="M.5 1l4 3.500 4-3.500" fill="none" stroke="#000" stroke-width="2"/></svg></div><div class="brow pin"><q class="ex plus"></q><svg width="16" height="16"><use href="#net"/></svg><span>nand_gate</span></div></div></div>
        <div class="box"><div class="bmain"><div class="bhead"><span>Signals</span><svg class="dd" width="9" height="6" viewBox="0 0 9 6"><path d="M.5 1l4 3.500 4-3.500" fill="none" stroke="#000" stroke-width="2"/></svg></div><div class="brow pin"><q class="ex plus"></q><svg width="16" height="16"><use href="#net"/></svg><span>nand_gate</span></div></div></div>
      </div>
    </div>
    <div class="vgrip"><em></em></div>
    <div class="props">
      <h4>Properties of Instance: temp_imp_temp1</h4>
      <div class="box"><div class="bmain"><div class="bhead two"><span>Name</span><svg class="dd" width="9" height="6" viewBox="0 0 9 6"><path d="M.5 5l4-3.500 4 3.500" fill="none" stroke="#000" stroke-width="2"/></svg><span class="v">Value</span></div>
        <div class="brow two"><span>Verilog Model</span><span>AND2</span></div><div class="brow two alt"><span>VHDL Model</span><span>AND2</span></div><div class="brow two"><span>Type</span><span>and2</span></div></div>
        <div class="vs"><b class="u"></b><b class="thumb g27"></b><span class="track"></span><b class="d"></b></div></div>
    </div>
  </div>
  <div class="btabs">
    <div class="bt1"><svg width="16" height="16"><use href="#doc"/></svg>Console</div><div class="bt2"><svg width="16" height="16"><use href="#err"/></svg>Errors</div><div class="bt3"><svg width="16" height="16"><use href="#warn"/></svg>Warnings</div><div class="bt4"><svg width="16" height="16"><use href="#find"/></svg>Find in Files Results</div><div class="bt5 on"><svg width="16" height="16"><use href="#grid"/></svg>View by Category</div>
  </div>
  <footer class="status"><span>Zoom out such that objects become smaller</span><span>[28,0]</span></footer>
</main>
</div>

<aside class="float">
  <div class="ptitle"><span>Design</span><div class="pbtns"><b><svg><use href="#brest"/></svg></b><b><svg><use href="#bclose"/></svg></b></div></div>
  <div class="frow upper">
    <div class="vtool"><i><svg><use href="#newsrc"/></svg></i><i><svg><use href="#adddoc"/></svg></i><i><svg><use href="#addcopy"/></svg></i><s></s><i><svg><use href="#hier"/></svg></i><s></s><i><svg><use href="#remdoc"/></svg></i><s></s><i><svg><use href="#chipred"/></svg></i><i><svg><use href="#checkdoc"/></svg></i><s></s><i><svg><use href="#cols"/></svg></i></div>
    <div class="pane">
      <div class="views"><span class="vw">View</span><q class="radio on"></q><svg width="16" height="16"><use href="#chipblue"/></svg><span class="im">Implementa</span><q class="radio"></q><svg width="16" height="16"><use href="#sim"/></svg><span class="si">Simula</span></div>
      <div class="tree">
        <div class="thead">Hierarchy</div>
        <div class="rows">
          <div class="row"><q class="ln"></q><svg width="16" height="16"><use href="#project"/></svg><span class="t1">Assignment_1.3</span></div>
          <div class="row"><q class="ex"></q><svg width="16" height="16"><use href="#chip"/></svg><span class="t1">xc3s50-5pq208</span></div>
          <div class="row sel"><q class="ln child end"></q><svg width="16" height="16"><use href="#vhd"/></svg><svg width="16" height="16"><use href="#hierc"/></svg><span class="t2">nand_gate - Behavioral</span></div>
        </div>
        <div class="hs"><b class="l"></b><b class="thumb"></b><span class="track"></span><b class="r"></b></div>
      </div>
    </div>
  </div>
  <div class="fgrip"><em></em></div>
  <div class="frow lower">
    <div class="vtool"><i><svg><use href="#play"/></svg></i><s></s><i><svg><use href="#procmap"/></svg></i><i><svg><use href="#procx"/></svg></i><s></s><i><svg><use href="#procc"/></svg></i><s></s><i><svg><use href="#cols"/></svg></i></div>
    <div class="pane">
      <div class="running"><svg width="16" height="16"><use href="#proc"/></svg><span>No Processes Running</span></div>
      <div class="tree ptree">
        <div class="pmain">
          <div class="thead">Processes: nand_gate - Behavioral</div>
          <div class="rows">
            <div class="row"><q class="ln"></q><svg width="16" height="16"><use href="#sigma"/></svg><span class="p1">Design Summary/Rep...</span></div>
            <div class="row"><q class="ex plus"></q><svg width="16" height="16"><use href="#tools"/></svg><span class="p1">Design Utilities</span></div>
            <div class="row"><q class="ex plus"></q><svg width="16" height="16"><use href="#tools"/></svg><span class="p1">User Constraints</span></div>
            <div class="row"><q class="ex"></q><svg width="16" height="16"><use href="#proc"/></svg><svg width="16" height="16"><use href="#ok"/></svg><span class="p2">Synthesize - XST</span></div>
            <div class="row sel"><q class="ln child"></q><svg width="16" height="16"><use href="#rtl"/></svg><span class="p1">View RTL Schematic</span></div>
            <div class="row"><q class="ln child"></q><svg width="16" height="16"><use href="#tech"/></svg><span class="p1">View Technology S...</span></div>
            <div class="row"><q class="ln child"></q><svg width="16" height="16"><use href="#proc"/></svg><svg width="16" height="16"><use href="#ok"/></svg><span class="p2">Check Syntax</span></div>
            <div class="row"><q class="ln child end"></q><svg width="16" height="16"><use href="#proc"/></svg><span class="p1">Generate Post-Syn...</span></div>
            <div class="row"><q class="ex plus"></q><svg width="16" height="16"><use href="#proc"/></svg><svg width="16" height="16"><use href="#ok"/></svg><span class="p2">Implement Design</span></div>
            <div class="row"><q class="ln"></q><svg width="16" height="16"><use href="#proc"/></svg><span class="p1">Generate Programmi...</span></div>
            <div class="row"><q class="ex plus"></q><svg width="16" height="16"><use href="#conf"/></svg><span class="p1">Configure Target Device</span></div>
          </div>
        </div>
        <div class="vs"><b class="u"></b><b class="thumb g153"></b><span class="track"></span><b class="d"></b></div>
      </div>
    </div>
  </div>
</aside>
</body>
</html>
```
FILE: styles.css
```css
* { box-sizing: border-box; }
body { margin: 0; width: 1600px; height: 900px; overflow: hidden; background: #efebe7; color: #1a1a1a; font: 13px/18px "DejaVu Sans", sans-serif; white-space: nowrap; }
.defs { position: absolute; }
svg { display: block; flex: none; overflow: hidden; }
q { quotes: none; }
i, em, b { font-style: normal; display: block; }

/* GNOME shell */
.topbar { height: 27px; background: #131313; color: #f0f0f0; display: grid; grid-template-columns: 99px 22px 652px 86px 1fr; padding-left: 18px; align-items: center; font-size: 13.6px; }
.topbar .clock { font: 14.3px "Noto Sans", sans-serif; margin-left: 2px; }
.app-ico { margin-top: -1px; }
.tray { display: flex; gap: 12px; justify-content: flex-end; padding-right: 17px; margin-top: -1px; }
.screen { display: flex; height: 873px; }
.dock { width: 70px; flex: none; background: linear-gradient(#3f2125, #351b2a 45%, #2b1528); display: flex; flex-direction: column; align-items: center; padding-top: 13px; }
.app { width: 70px; height: 62px; flex: none; display: flex; align-items: center; justify-content: center; }
.soft { padding-bottom: 4px; }
.run { background: radial-gradient(circle at 7.500px 31px, #e95420 2.6px, transparent 3.2px); }
.active { width: 60px; height: 60px; margin: 1px 0; border-radius: 12px; background: radial-gradient(circle at 2.500px 30px, #e95420 2.6px, transparent 3.2px), #5a4650; }
.rule { width: 44px; height: 1px; margin: 8px 0; background: #77656e; flex: none; }
.apps { margin-top: auto; margin-bottom: 23px; }

/* window frame */
.window { width: 1530px; display: flex; flex-direction: column; }
.titlebar { height: 37px; flex: none; background: #ebebeb; border-bottom: 1px solid #bfbdbb; display: grid; grid-template-columns: 1fr 100px; align-items: center; }
.wtitle { font: bold 14.35px "Noto Sans", sans-serif; color: #3d3d3d; margin-left: 298px; }
.wbtns { display: flex; gap: 12px; margin-left: 3px; }
.wbtns i { width: 22px; height: 22px; border-radius: 11px; background: #dadada; }
.menubar { height: 26px; flex: none; background: linear-gradient(#efebe7, #e2ddd8); border-bottom: 1px solid #c6c2be; display: flex; align-items: center; gap: 12.2px; padding-top: 2px; }
.menubar > svg { margin-right: -6px; }
.menubar u { text-underline-offset: 2px; text-decoration-thickness: 1px; }
.mdi { margin-left: auto; display: flex; gap: 2px; padding-right: 1px; margin-top: -6px; }
.mdi b { width: 18px; height: 17px; border: 1px solid #8b8783; border-radius: 3px; padding: 1px; background: #f6f4f1; }
.mdi svg { border: 1px solid #8b8783; border-radius: 3px; width: 14px; height: 13px; }
.toolbar { height: 30px; flex: none; display: flex; border-top: 1px solid #fff; border-bottom: 1px solid #c2beba; }
.group { display: flex; align-items: center; border-right: 1px solid #c9c5c1; box-shadow: 1px 0 #fff; height: 28px; }
.group:last-child { border: 0; box-shadow: none; }
.group em { width: 4px; height: 16px; margin: 0 0 0 4px; background: repeating-linear-gradient(#b3afab 0 1px, transparent 1px 3px); }
.group i { width: 29px; height: 28px; display: grid; place-items: center; }
.group svg { width: 16px; height: 16px; }
.group i.hover, .group i.down { width: 27px; height: 26px; margin: 0 1px; border: 1px solid #8d8986; border-radius: 3px; background: #fbf9f7; }
.group i.down { background: #cfcac5; }
.group s { width: 2px; height: 16px; margin: 0 3px; border-left: 1px solid #cbc7c3; border-right: 1px solid #fff; }
.more { width: 22px; display: grid; place-items: center; padding-left: 10px; }
.group .chev { width: 8px; height: 8px; }

/* docks */
.work { display: flex; height: 600px; flex: none; }
.leftdock { width: 283px; display: flex; flex-direction: column; justify-content: space-between; }
.ptitle { height: 19px; display: flex; justify-content: space-between; border: 1px solid #cac6c2; box-shadow: inset 1px 1px #fff, 0 1px #fff; padding: 0 1px 0 3px; line-height: 16px; }
.pbtns { display: flex; gap: 2px; padding-top: 4px; }
.pbtns b { width: 14px; height: 12px; border: 1px solid #827e7a; border-radius: 4px; }
.pbtns svg { width: 14px; height: 12px; margin: -1px; }
.leftdock .ptitle { width: 277px; margin-left: 1px; }
.ltabs { display: flex; height: 27px; border-top: 1px solid #aaa6a2; width: 242px; padding-left: 1px; }
.ltabs div { display: flex; align-items: center; border: 1px solid #918d89; border-top: 0; border-left: 0; border-radius: 0 0 3px 3px; background: linear-gradient(#d4cfca, #efebe7); height: 25px; padding: 0 0 1px 6px; }
.ltabs .lt1 { width: 71px; border-bottom: 2px solid #4f7fab; height: 27px; background: #efebe7; }
.ltabs .lt2 { width: 71px; }
.ltabs .lt3 { width: 98px; }
.ltabs span { margin-left: 12px; }

.right { flex: 1; display: flex; flex-direction: column; }
.canvasrow { height: 572px; display: flex; border-bottom: 1px solid #aaa6a2; }
.canvasrow > .vtool { width: 30px; border-right: 1px solid #bab6b2; padding-left: 1px; box-shadow: inset 1px 0 #fff; margin-right: 1px; }
.schematic { margin-top: 2px; }
.vtool i { width: 26px; height: 30px; display: grid; place-items: center; }
.vtool svg { width: 16px; height: 16px; }
.vtool i.down { height: 26px; margin: 2px 0 4px; background: #cfcac5; border: 1px solid #9e9a96; border-radius: 3px; }
.vtool s { display: block; width: 16px; height: 2px; margin: 3px 5px; border-top: 1px solid #cbc7c3; border-bottom: 1px solid #fff; }
.schematic text { font-family: "Liberation Sans", sans-serif; }
.lg { font-size: 43.3px; }
.lg .xl { font-size: 43.9px; }
.md { font-size: 37.7px; }
.sm { font-size: 18.4px; }
.dtabs { display: flex; height: 28px; border-top: 1px solid #8f8b87; margin-top: 1px; }
.dtabs div { height: 25px; display: grid; grid-template-columns: 16px 1fr 14px; align-items: center; text-align: center; padding: 0 8px 0 5px; border: 1px solid #8f8b87; border-top: 0; border-left: 0; border-radius: 0 0 3px 3px; background: linear-gradient(#cfcac5, #efebe7); }
.dtabs .dt1 { width: 311px; border-left: 1px solid #8f8b87; }
.dtabs .dt2 { width: 314px; }
.dtabs .dt3 { width: 310px; height: 27px; padding-top: 2px; border-bottom: 2px solid #4f7fab; background: linear-gradient(#e8e4e0, #f6f3f0); }

/* category panel */
.hgrip { height: 6px; padding: 1px 0 0 743px; }
.hgrip em, .fgrip em { width: 40px; height: 4px; background: repeating-linear-gradient(90deg, #b3afab 0 1px, transparent 1px 3px); }
.ptitle.wide { height: 20px; flex: none; line-height: 16px; padding-left: 4px; padding-right: 0; }
.category { display: flex; height: 106px; padding-left: 4px; flex: none; }
h4 { margin: 0; font-size: 13px; line-height: 18px; height: 24px; text-align: center; }
.objects { width: 755px; }
.tables { display: grid; grid-template-columns: 247px 248px 248px; column-gap: 6px; }
.box { height: 77px; border: 1px solid #aaa6a2; display: flex; padding: 1px; background: #efebe7; }
.bmain { flex: 1; background: #fff; overflow: hidden; }
.bhead { height: 26px; background: linear-gradient(#efebe7 70%, #e6e1dc); border-bottom: 1px solid #9d9995; display: flex; justify-content: space-between; align-items: center; padding: 0 10px 0 4px; box-shadow: inset -1px 0 #d4d0cc; }
.brow { height: 18px; display: flex; align-items: center; line-height: 18px; }
.alt { background: #e7e6e3; }
.sel { background: #8f8b7d; color: #f2f0ea; }
.inst { padding-left: 26px; }
.inst svg { margin-right: 6px; }
.pin { padding-left: 6px; }
.pin svg { margin-right: 6px; }
.vgrip { width: 13px; padding: 32px 0 0 4px; }
.vgrip em { width: 4px; height: 40px; background: repeating-linear-gradient(#b3afab 0 1px, transparent 1px 3px); }
.props { width: 754px; }
.bhead.two { display: grid; grid-template-columns: 1fr 16px 368px; padding: 0 0 0 4px; }
.bhead .v { border-left: 1px solid #cac6c2; padding-left: 5px; }
.brow.two { display: grid; grid-template-columns: 1fr 363px; padding-left: 3px; }

/* scrollbars */
.vs { width: 15px; margin-left: 1px; display: flex; flex-direction: column; border: 1px solid #8d8986; border-radius: 3px; overflow: hidden; }
.vs b, .hs b { background: linear-gradient(135deg, #fbf9f7, #e4dfda); flex: none; }
.vs b.u, .vs b.d { height: 13px; display: grid; place-items: center; }
.vs b.u::after, .vs b.d::after { content: ""; border: 4px solid transparent; border-top-width: 0; border-bottom: 4px solid #000; }
.vs b.d::after { border-bottom-width: 0; border-top: 4px solid #000; }
.vs .thumb { border: 1px solid #8d8986; border-width: 1px 0; display: grid; place-items: center; }
.vs .thumb::after { content: ""; width: 7px; height: 7px; background: repeating-linear-gradient(#bbb7b3 0 1px, transparent 1px 3px); }
.track { flex: 1; background: #d5cdc5; }
.vs .track + .d { border-top: 1px solid #8d8986; }
.vs .u + .track { border-top: 1px solid #8d8986; }
.g29 { height: 30px; }
.g27 { height: 28px; }
.g153 { height: 154px; }
.hs { height: 15px; display: flex; border: 1px solid #8d8986; border-radius: 3px; overflow: hidden; }
.hs .l, .hs .r { width: 14px; display: grid; place-items: center; }
.hs .l::after, .hs .r::after { content: ""; border: 4px solid transparent; border-left-width: 0; border-right: 5px solid #000; }
.hs .r::after { border-right-width: 0; border-left: 5px solid #000; }
.hs .thumb { width: 142px; border: 1px solid #8d8986; border-width: 0 1px; display: grid; place-items: center; }
.hs .thumb::after { content: ""; width: 7px; height: 7px; background: repeating-linear-gradient(90deg, #bbb7b3 0 1px, transparent 1px 3px); }
.hs .r { border-left: 1px solid #8d8986; }

/* bottom tabs */
.btabs { display: flex; height: 26px; border-top: 1px solid #9d958e; padding-left: 1px; flex: none; }
.btabs div { height: 22px; display: flex; align-items: center; border: 1px solid #8f8b87; border-top: 0; border-left: 0; border-radius: 0 0 3px 3px; background: linear-gradient(#cfcac5, #efebe7); padding: 0 0 2px 6px; gap: 11px; flex: none; }
.bt1 { width: 93px; }
.btabs .bt1 { padding-left: 5px; }
.bt2 { width: 80px; }
.bt3 { width: 102px; }
.bt4 { width: 169px; }
.bt5 { width: 155px; }
.btabs .bt4 { gap: 10px; }
.btabs .on { height: 25px; padding-bottom: 0; gap: 9px; border-bottom: 2px solid #4f7fab; background: linear-gradient(#e8e4e0, #f6f3f0); }
.status { display: flex; justify-content: space-between; padding: 2px 5px 0 6px; }

/* floating design panel */
.float { position: absolute; left: 79px; top: 136px; width: 277px; height: 572px; background: #efebe7; border: 1px solid #7d7975; box-shadow: inset 1px 1px #fff, inset -2px -2px #d0ccc8, 0 2px 10px rgba(0,0,0,.35); padding: 4px 4px 4px 3px; overflow: hidden; }
.float .ptitle { height: 19px; padding-right: 0; width: 269px; line-height: 15px; }
.frow { display: flex; }
.upper { height: 288px; border-bottom: 1px solid #b3afab; width: 268px; }
.lower { height: 251px; width: 268px; }
.float .vtool { width: 28px; border-right: 1px solid #cac6c2; flex: none; padding-left: 1px; }
.lower .vtool { border-top: 1px solid #fff; }
.pane { width: 240px; padding-left: 1px; }
.views { height: 24px; display: flex; align-items: center; padding-left: 3px; overflow: hidden; }
.vw { width: 32px; }
.radio { width: 12px; height: 12px; border-radius: 6px; border: 1px solid #a5a19d; background: #fff; flex: none; }
.radio.on { background: radial-gradient(#333 3px, #fff 3.800px); }
.radio + svg { margin-left: 6px; }
.im { width: 79px; overflow: hidden; margin: 0 3px 0 5px; }
.si { margin-left: 4px; width: 45px; overflow: hidden; }
.tree { border: 1px solid #aaa6a2; padding: 0 1px; height: 264px; display: flex; flex-direction: column; }
.thead { height: 27px; flex: none; border-bottom: 1px solid #9d9995; background: linear-gradient(#efebe7 70%, #e6e1dc); padding-left: 4px; line-height: 28px; overflow: hidden; }
.rows { flex: 1; background: #fff; overflow: hidden; }
.row { height: 18px; display: flex; align-items: center; padding-left: 6px; }
.ex { position: relative; width: 9px; height: 9px; border: 1px solid #8f8b87; background: linear-gradient(#000, #000) center / 5px 1px no-repeat #fff; margin-right: 8px; flex: none; }
.ex::before { content: none; }
.ex::after { content: ""; position: absolute; left: 9px; top: 3px; width: 4px; height: 1px; background: repeating-linear-gradient(90deg, #aaa 0 1px, transparent 1px 2px); }
.ex.plus { background: linear-gradient(#000, #000) center / 5px 1px no-repeat, linear-gradient(#000, #000) center / 1px 5px no-repeat #fff; }
.ln::before, .ln::after, .radio::before, .radio::after { content: none; }
.ln { width: 17px; height: 18px; flex: none; background: repeating-linear-gradient(#aaa 0 1px, transparent 1px 2px) 4px 0 / 1px 18px no-repeat, repeating-linear-gradient(90deg, #aaa 0 1px, transparent 1px 2px) 4px 9px / 9px 1px no-repeat; }
.ln.child { width: 37px; background-position: 24px 0, 24px 9px; }
.ln.end { background-size: 1px 9px, 9px 1px; }
.t1 { margin-left: 6px; }
.t2 { margin-left: 6px; }
.p1 { margin-left: 22px; }
.p2 { margin-left: 6px; }
.fgrip { height: 6px; padding: 1px 0 0 114px; }
.running { height: 33px; display: flex; align-items: center; gap: 9px; padding-left: 6px; }
.ptree { flex-direction: row; height: 218px; padding: 1px; }
.ptree .rows { background: repeating-linear-gradient(#aaa 0 1px, transparent 1px 2px) 10px 0 / 1px 100% no-repeat #fff; }
.pmain { width: 221px; display: flex; flex-direction: column; overflow: hidden; }
.ptree .thead { height: 26px; line-height: 25px; width: 220px; padding-right: 4px; }
```
